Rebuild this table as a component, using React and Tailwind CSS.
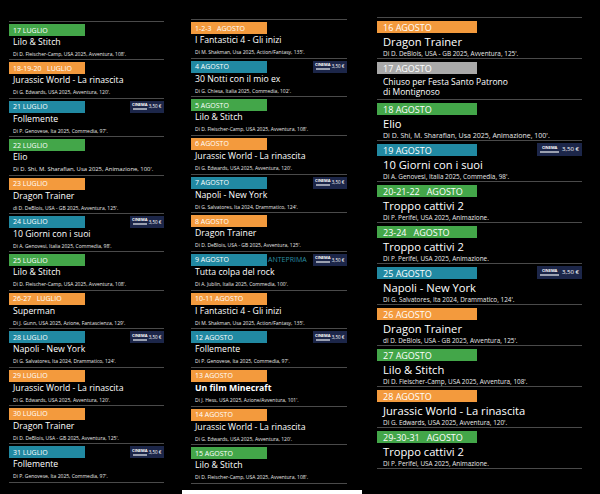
const ORANGE = "bg-[#f39a3d]";
const GREEN = "bg-[#43a649]";
const TEAL = "bg-[#2189a2]";
const GRAY = "bg-[#a9a9a9]";

const lilo = ["Lilo & Stitch", "Di D. Fleischer-Camp, USA 2025, Avventura, 108'."];
const jurassic = ["Jurassic World - La rinascita", "Di G. Edwards, USA 2025, Avventura, 120'."];
const folle = ["Follemente", "Di P. Genovese, Ita 2025, Commedia, 97'."];
const elio = ["Elio", "Di D. Shi, M. Sharafian, Usa 2025, Animazione, 100'."];
const dragon = ["Dragon Trainer", "di D. DeBlois, USA - GB 2025, Avventura, 125'."];
const giorni = ["10 Giorni con i suoi", "Di A. Genovesi, Italia 2025, Commedia, 98'."];
const napoli = ["Napoli - New York", "Di G. Salvatores, Ita 2024, Drammatico, 124'."];
const fantastici = ["I Fantastici 4 - Gli inizi", "Di M. Shakman, Usa 2025, Action/Fantasy, 135'."];
const troppo = ["Troppo cattivi 2", "Di P. Perifel, USA 2025, Animazione."];

const luglio = [
    { date: "17 LUGLIO", color: GREEN, film: lilo },
    { date: "18-19-20   LUGLIO", color: ORANGE, film: jurassic },
    { date: "21 LUGLIO", color: TEAL, film: folle, cinema: true },
    { date: "22 LUGLIO", color: GREEN, film: elio, bigSub: true },
    { date: "23 LUGLIO", color: ORANGE, film: dragon },
    { date: "24 LUGLIO", color: TEAL, film: giorni, cinema: true },
    { date: "25 LUGLIO", color: GREEN, film: lilo },
    { date: "26-27   LUGLIO", color: ORANGE, film: ["Superman", "Di J. Gunn, USA 2025, Azione, Fantascienza, 129'."] },
    { date: "28 LUGLIO", color: TEAL, film: napoli, cinema: true },
    { date: "29 LUGLIO", color: ORANGE, film: jurassic },
    { date: "30 LUGLIO", color: ORANGE, film: ["Dragon Trainer", "Di D. DeBlois, USA - GB 2025, Avventura, 125'."] },
    { date: "31 LUGLIO", color: TEAL, film: folle, cinema: true },
];

const agosto1 = [
    { date: "1-2-3   AGOSTO", color: ORANGE, film: fantastici },
    { date: "4 AGOSTO", color: TEAL, film: ["30 Notti con il mio ex", "Di G. Chiesa, Italia 2025, Commedia, 102'."], cinema: true },
    { date: "5 AGOSTO", color: GREEN, film: lilo },
    { date: "6 AGOSTO", color: ORANGE, film: jurassic },
    { date: "7 AGOSTO", color: TEAL, film: napoli, cinema: true },
    { date: "8 AGOSTO", color: ORANGE, film: ["Dragon Trainer", "Di D. DeBlois, USA - GB 2025, Avventura, 125'."] },
    { date: "9 AGOSTO", color: TEAL, film: ["Tutta colpa del rock", "Di A. Jublin, Italia 2025, Commedia, 100'."], cinema: true, preview: true },
    { date: "10-11 AGOSTO", color: ORANGE, film: fantastici },
    { date: "12 AGOSTO", color: TEAL, film: folle, cinema: true },
    { date: "13 AGOSTO", color: ORANGE, film: ["Un film Minecraft", "Di J. Hess, USA 2025, Azione/Avventura, 101'."], bold: true },
    { date: "14 AGOSTO", color: ORANGE, film: jurassic },
    { date: "15 AGOSTO", color: GREEN, film: lilo },
];

const agosto2 = [
    { date: "16 AGOSTO", color: ORANGE, film: ["Dragon Trainer", "Di D. DeBlois, USA - GB 2025, Avventura, 125'."] },
    { date: "17 AGOSTO", color: GRAY, closed: ["Chiuso per Festa Santo Patrono", "di Montignoso"] },
    { date: "18 AGOSTO", color: GREEN, film: elio, bigSub: true },
    { date: "19 AGOSTO", color: TEAL, film: giorni, cinema: true },
    { date: "20-21-22   AGOSTO", color: GREEN, film: troppo },
    { date: "23-24   AGOSTO", color: GREEN, film: troppo },
    { date: "25 AGOSTO", color: TEAL, film: napoli, cinema: true },
    { date: "26 AGOSTO", color: ORANGE, film: dragon },
    { date: "27 AGOSTO", color: GREEN, film: lilo },
    { date: "28 AGOSTO", color: ORANGE, film: jurassic },
    { date: "29-30-31   AGOSTO", color: GREEN, film: troppo },
];

// two sizes: the two narrow columns and the wide right one
const SIZES = {
    sm: {
        label: "w-[76px] h-[12px] pl-[4px] text-[7px] mt-[2px]",
        title: "pl-[4px] text-[8.7px] leading-[11px] mt-[1px]",
        sub: "pl-[4px] text-[5px] leading-[6px] mt-[3px]",
        bigSub: "pl-[4px] text-[5.9px] leading-[6px] mt-[3px]",
        badge: "w-[34px] h-[12px] gap-[2px]",
        badgeText: "text-[4.5px]",
        logo: "w-[14px] h-[7px]",
        preview: "text-[7px]",
    },
    lg: {
        label: "w-[100px] h-[12px] pl-[6px] text-[9px] mt-[3px]",
        title: "pl-[6px] text-[11.2px] leading-[13px] mt-[2px]",
        sub: "pl-[6px] text-[6.4px] leading-[7px] mt-[2px]",
        bigSub: "pl-[6px] text-[7px] leading-[7px] mt-[2px]",
        badge: "w-[45px] h-[13px] gap-[3px]",
        badgeText: "text-[6px]",
        logo: "w-[19px] h-[9px]",
        preview: "text-[9px]",
    },
};

const CinemaBadge = ({ s }) => (
    <div className={`${s.badge} bg-[#1c2649] flex items-center justify-center`}>
        <div className={`${s.logo} flex flex-col justify-center items-center`}>
            <span className="text-[4px] leading-[4px] font-bold text-white tracking-tight">CINEMA</span>
            <span className="w-full h-[2px] bg-[#9aa0b0] mt-[1px]"></span>
        </div>
        <span className={`${s.badgeText} text-white`}>3,50 €</span>
    </div>
);

const Entry = ({ item, s, height }) => (
    <div className={`${height} border-b border-[#4a4a4a] flex flex-col`}>
        <div className="flex items-center justify-between">
            <div className="flex items-center">
                <div className={`${s.label} ${item.color} text-white flex items-center whitespace-pre leading-none`}>
                    {item.date}
                </div>
                {item.preview && (
                    <span className={`${s.preview} text-[#2a8ea3] ml-[1px] mt-[2px] leading-none`}>ANTEPRIMA</span>
                )}
            </div>
            {item.cinema && <div className="mt-[2px]"><CinemaBadge s={s} /></div>}
        </div>
        {item.closed ? (
            <div className="pl-[6px] mt-[3px] text-[8.5px] leading-[9.5px] text-white">
                <div>{item.closed[0]}</div>
                <div>{item.closed[1]}</div>
            </div>
        ) : (
            <>
                <div className={`${s.title} text-white whitespace-nowrap ${item.bold ? "font-bold" : ""}`}>
                    {item.film[0]}
                </div>
                <div className={`${item.bigSub ? s.bigSub : s.sub} text-[#e8e8e8] whitespace-nowrap`}>
                    {item.film[1]}
                </div>
            </>
        )}
    </div>
);

const Column = ({ items, size, height, className }) => (
    <div className={`${className} flex flex-col border-t border-[#4a4a4a]`}>
        {items.map((item, i) => (
            <Entry key={i} item={item} s={SIZES[size]} height={height} />
        ))}
    </div>
);

export default function App() {
    return (
        <div className="w-[600px] h-[494px] bg-black overflow-hidden flex flex-col" style={{ fontFamily: '"Open Sans", "Noto Sans", sans-serif' }}>
            <div className="flex items-start h-[490px]">
                <Column items={luglio} size="sm" height="h-[38.4px]" className="ml-[9px] w-[155px] mt-[21px]" />
                <Column items={agosto1} size="sm" height="h-[38.67px]" className="ml-[27px] w-[156px] mt-[19px]" />
                <Column items={agosto2} size="lg" height="h-[41px]" className="ml-[30px] w-[205px] mt-[17px]" />
            </div>
            <div className="ml-[182px] w-[180px] h-[4px] bg-white"></div>
        </div>
    );
}
